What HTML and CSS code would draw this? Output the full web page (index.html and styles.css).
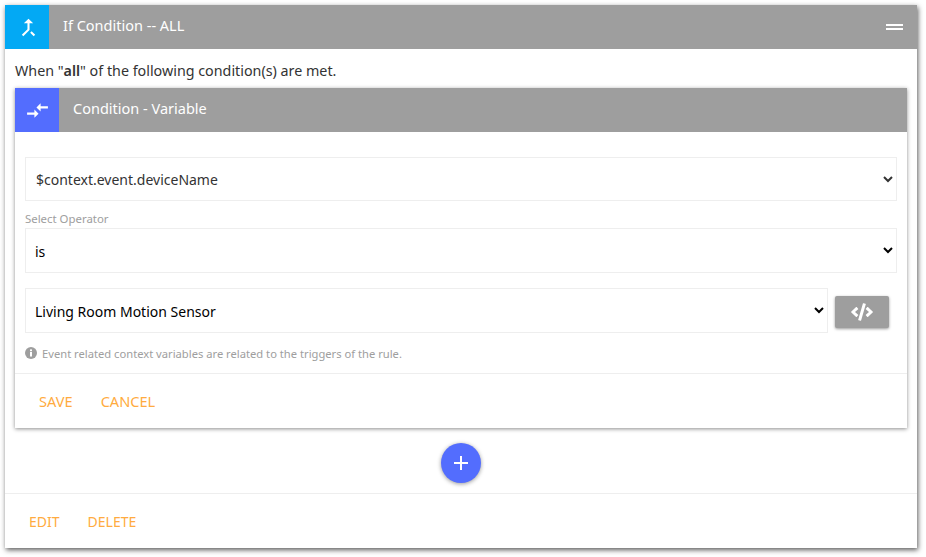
FILE: index.html
```html
<!DOCTYPE html>
<html lang="en">
<head>
    <meta charset="UTF-8">
    <meta name="viewport" content="width=device-width, initial-scale=1.0">
    <title>If Condition</title>
    <link rel="stylesheet" href="styles.css">
</head>
<body>
    <div class="card">
        <!-- Rule header -->
        <div class="card-header">
            <div class="card-icon icon-blue">
                <svg width="25" height="25" viewBox="0 0 24 24"><path d="M17 20.41L18.41 19 15 15.59 13.59 17 17 20.41zM7.5 8H11v5.59L5.59 19 7 20.41l6-6V8h3.5L12 3.5 7.5 8z"/></svg>
            </div>
            <div class="card-title">If Condition -- ALL</div>
            <div class="drag-handle"><span></span><span></span></div>
        </div>

        <p class="intro">When "<b>all</b>" of the following condition(s) are met.</p>

        <!-- Condition card -->
        <div class="card inner-card">
            <div class="card-header">
                <div class="card-icon icon-indigo">
                    <svg width="25" height="25" viewBox="0 0 24 24"><path d="M9.01 14H2v2h7.01v3L13 15l-3.99-4v3zm5.98-1v-3H22V8h-7.01V5L11 9l3.99 4z"/></svg>
                </div>
                <div class="card-title">Condition - Variable</div>
            </div>
            <div class="card-body">
                <select class="field field-muted">
                    <option>$context.event.deviceName</option>
                </select>
                <label class="field-label">Select Operator</label>
                <select class="field field-tall">
                    <option>is</option>
                </select>
                <div class="value-row">
                    <select class="field field-tall">
                        <option>Living Room Motion Sensor</option>
                    </select>
                    <button class="code-btn">
                        <svg width="22" height="18" viewBox="0 0 640 512"><path d="M278.9 511.5l-61-17.7c-6.4-1.8-10-8.5-8.2-14.9L346.2 8.7c1.8-6.4 8.5-10 14.9-8.2l61 17.7c6.4 1.8 10 8.5 8.2 14.9L293.8 503.3c-1.9 6.4-8.5 10.1-14.9 8.2zm-114-112.2l43.5-46.4c4.6-4.9 4.3-12.7-.8-17.2L117 256l90.6-79.7c5.1-4.5 5.5-12.3.8-17.2l-43.5-46.4c-4.5-4.8-12.1-5.1-17-.5L3.8 247.2c-5.1 4.7-5.1 12.8 0 17.5l144.1 135.1c4.9 4.6 12.5 4.4 17-.5zm327.2.6l144.1-135.1c5.1-4.7 5.1-12.8 0-17.5L492.1 112.1c-4.8-4.5-12.4-4.3-17 .5L431.6 159c-4.6 4.9-4.3 12.7.8 17.2L523 256l-90.6 79.7c-5.1 4.5-5.5 12.3-.8 17.2l43.5 46.4c4.5 4.9 12.1 5.1 17 .6z"/></svg>
                    </button>
                </div>
                <p class="help-text">
                    <svg width="12" height="12" viewBox="0 0 12 12"><circle cx="6" cy="6" r="6"/><rect x="5" y="5" width="2" height="4.5" fill="#fff"/><rect x="5" y="2.4" width="2" height="1.8" fill="#fff"/></svg>
                    Event related context variables are related to the triggers of the rule.
                </p>
            </div>
            <div class="card-actions">
                <a class="action">SAVE</a>
                <a class="action">CANCEL</a>
            </div>
        </div>

        <div class="add-row">
            <button class="add-btn">
                <svg width="16" height="16" viewBox="0 0 16 16"><path d="M7 1h2v6h6v2H9v6H7V9H1V7h6z"/></svg>
            </button>
        </div>

        <div class="card-actions">
            <a class="action">EDIT</a>
            <a class="action">DELETE</a>
        </div>
    </div>
</body>
</html>
```

FILE: styles.css
```css
* {
    margin: 0;
    padding: 0;
    box-sizing: border-box;
}

body {
    font-family: "Noto Sans", "Open Sans", Arial, sans-serif;
    font-size: 14px;
    color: #333;
    background: #fff;
    padding: 5px 9px 9px 5px;
}

/* Cards */
.card {
    background: #fff;
    box-shadow: 1px 2px 5px rgba(0, 0, 0, 0.65);
}

.card-header {
    display: flex;
    align-items: center;
    height: 44px;
    background: #9e9e9e;
    color: #fff;
}

.card-icon {
    display: flex;
    justify-content: center;
    align-items: center;
    width: 44px;
    height: 44px;
}

.card-icon svg {
    fill: #fff;
}

.icon-blue {
    background: #03a9f4;
    padding-left: 2px;
}

.icon-indigo {
    background: #536dfe;
}

.card-title {
    flex: 1;
    padding: 0 0 4px 14px;
    font-size: 14.5px;
}

.drag-handle {
    display: flex;
    flex-direction: column;
    gap: 2px;
    margin-right: 14px;
}

.drag-handle span {
    display: block;
    width: 17px;
    height: 2px;
    background: #fff;
}

.intro {
    height: 39px;
    padding: 12px 10px 0;
    line-height: 20px;
    font-size: 14.3px;
}

.intro b {
    font-weight: 600;
}

.inner-card {
    margin: 0 10px;
    box-shadow: 0 1px 4px rgba(0, 0, 0, 0.45);
}

.card-body {
    padding: 25px 10px 0;
}

/* Form fields */
.field {
    display: block;
    width: 100%;
    height: 44px;
    padding: 0 5px;
    border: 1px solid #eee;
    background: #fff;
    font-family: inherit;
    font-size: 14px;
    color: #000;
}

.field-tall {
    height: 45px;
    padding-top: 2px;
}

.field-muted {
    padding: 0 6px;
    color: #333;
}

.field-label {
    display: block;
    height: 27px;
    padding-top: 10px;
    line-height: 15px;
    font-size: 11.4px;
    color: #9e9e9e;
}

.value-row {
    display: flex;
    align-items: center;
    gap: 7px;
    margin-top: 15px;
    padding-right: 8px;
}

.value-row .field {
    flex: 1;
    width: auto;
}

.code-btn {
    display: flex;
    justify-content: center;
    align-items: center;
    width: 54px;
    height: 32px;
    margin-top: 3px;
    border: none;
    border-radius: 2px;
    background: #9e9e9e;
    box-shadow: 0 1px 3px rgba(0, 0, 0, 0.4);
}

.code-btn svg {
    fill: #fff;
}

.help-text {
    display: flex;
    align-items: center;
    gap: 5px;
    height: 40px;
    font-size: 11.2px;
    color: #9e9e9e;
}

.help-text svg {
    fill: #9e9e9e;
}

/* Actions */
.card-actions {
    display: flex;
    align-items: center;
    gap: 28px;
    height: 55px;
    padding: 0 24px;
    border-top: 1px solid #eee;
}

.action {
    font-size: 14px;
    color: #ffab40;
}

.inner-card .action {
    font-size: 14.6px;
}

.add-row {
    display: flex;
    justify-content: center;
    padding: 15px 0 10px;
}

.add-btn {
    display: flex;
    justify-content: center;
    align-items: center;
    width: 40px;
    height: 40px;
    border: none;
    border-radius: 50%;
    background: #536dfe;
    box-shadow: 0 1px 4px rgba(0, 0, 0, 0.4);
}

.add-btn svg {
    fill: #fff;
}
```
